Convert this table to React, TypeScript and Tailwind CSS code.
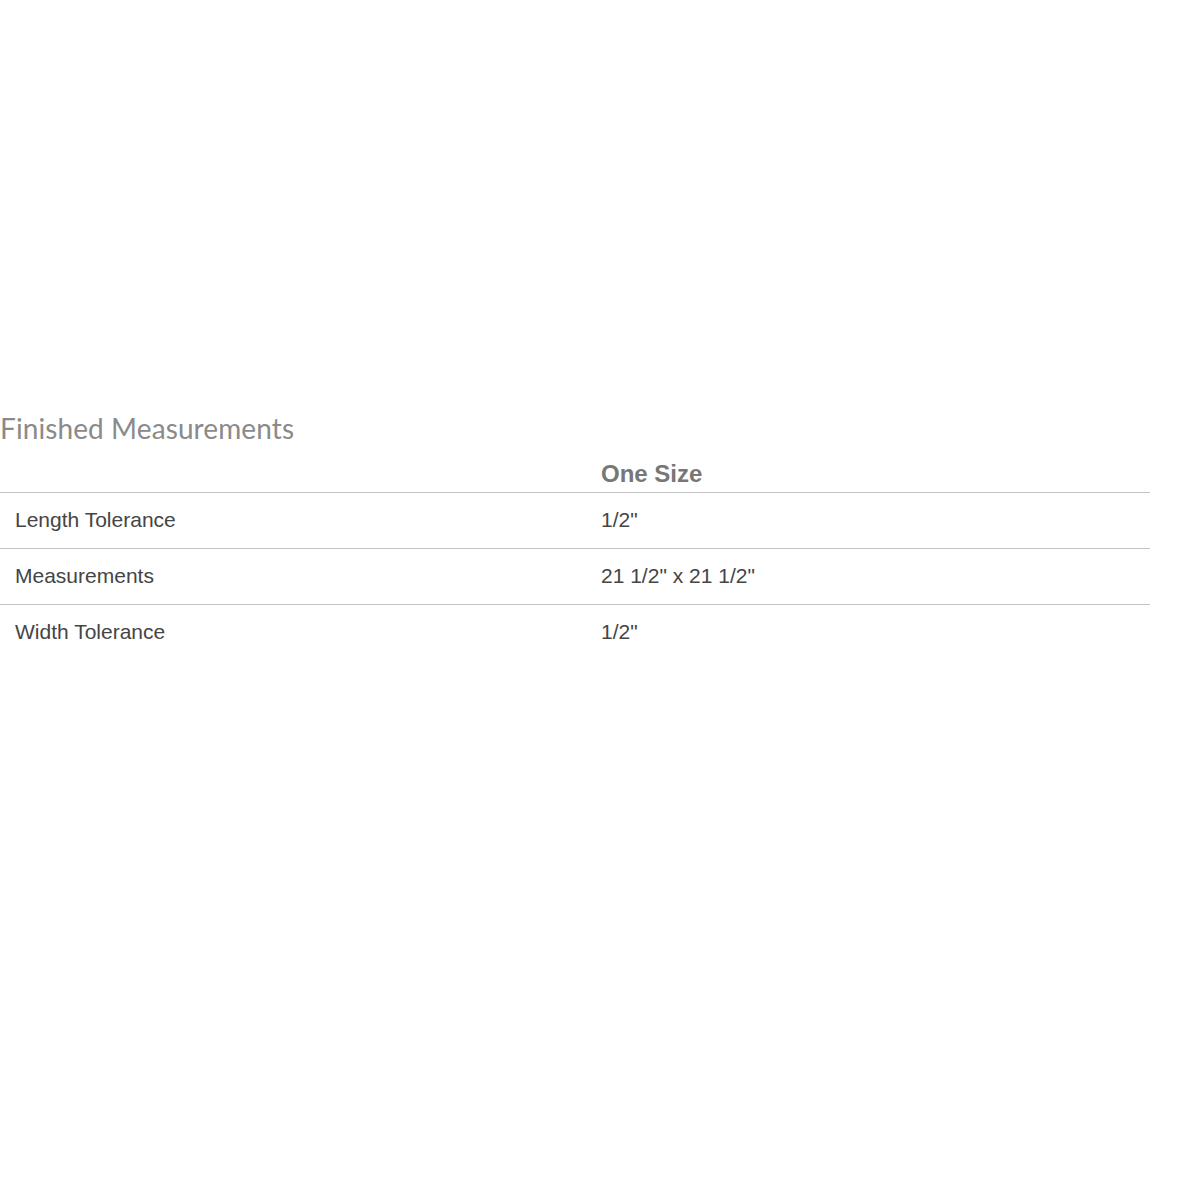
export default function App() {
  const rows = [
    ["Length Tolerance", '1/2"'],
    ["Measurements", '21 1/2" x 21 1/2"'],
    ["Width Tolerance", '1/2"'],
  ];
  return (
    <div className="w-[1200px] h-[1200px] bg-white">
      <div className="pt-[412px] w-[1150px]">
        <h2
          className="text-[28px] leading-[32px] text-[#8a8a8a] font-normal tracking-[0.1px]"
          style={{ fontFamily: "Lato, 'Open Sans', sans-serif" }}
        >
          Finished Measurements
        </h2>
        <div style={{ fontFamily: "'Liberation Sans', Arial, sans-serif" }}>
          <div className="grid grid-cols-[586px_1fr] pt-[18px] pb-[6px] border-b border-[#c4c4c4]">
            <div />
            <div className="px-[15px] text-[24px] leading-[24px] font-bold text-[#777777]">One Size</div>
          </div>
          {rows.map((r, i) => (
            <div
              key={i}
              className={`grid grid-cols-[586px_1fr] h-[56px] pb-[3px] items-center ${i < rows.length - 1 ? "border-b border-[#c4c4c4]" : ""}`}
            >
              <div className="px-[15px] text-[21px] leading-[21px] text-[#454545]">{r[0]}</div>
              <div className="px-[15px] text-[21px] leading-[21px] text-[#454545]">{r[1]}</div>
            </div>
          ))}
        </div>
      </div>
    </div>
  );
}
